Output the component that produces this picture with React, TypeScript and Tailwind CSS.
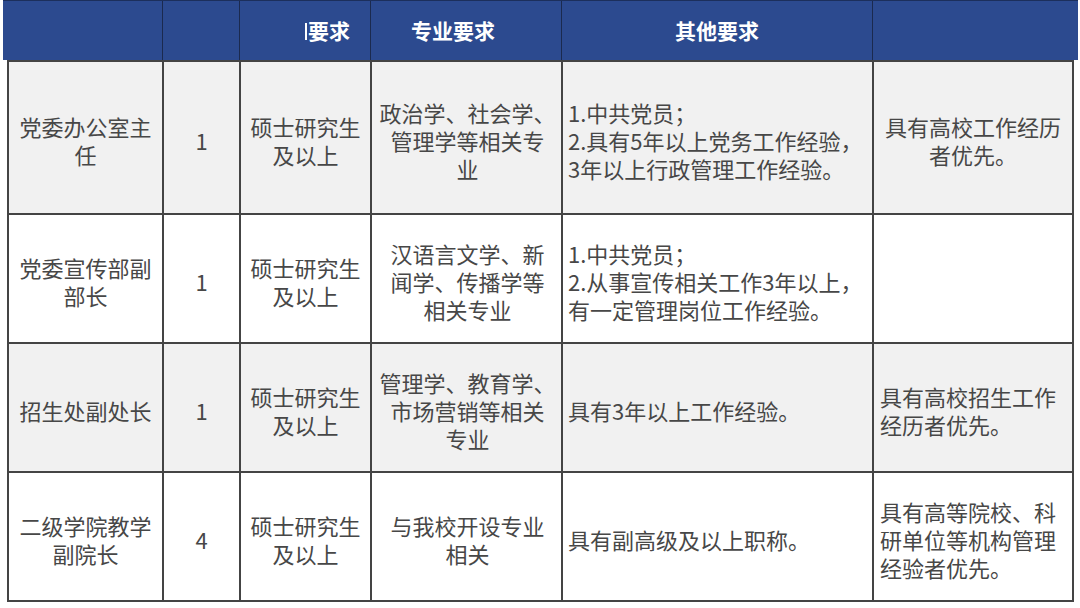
import React from "react";

type Row = {
  title: string[];
  count: string;
  degree: string[];
  major: string[];
  other: string[];
  extra: string[];
  extraAlign: "center" | "left";
  height: string;
  shaded: boolean;
};

const rows: Row[] = [
  {
    title: ["党委办公室主", "任"],
    count: "1",
    degree: ["硕士研究生", "及以上"],
    major: ["政治学、社会学、", "管理学等相关专", "业"],
    other: ["1.中共党员；", "2.具有5年以上党务工作经验，", "3年以上行政管理工作经验。"],
    extra: ["具有高校工作经历", "者优先。"],
    extraAlign: "center",
    height: "h-[153px]",
    shaded: true,
  },
  {
    title: ["党委宣传部副", "部长"],
    count: "1",
    degree: ["硕士研究生", "及以上"],
    major: ["汉语言文学、新", "闻学、传播学等", "相关专业"],
    other: ["1.中共党员；", "2.从事宣传相关工作3年以上，", "有一定管理岗位工作经验。"],
    extra: [],
    extraAlign: "center",
    height: "h-[129px]",
    shaded: false,
  },
  {
    title: ["招生处副处长"],
    count: "1",
    degree: ["硕士研究生", "及以上"],
    major: ["管理学、教育学、", "市场营销等相关", "专业"],
    other: ["具有3年以上工作经验。"],
    extra: ["具有高校招生工作", "经历者优先。"],
    extraAlign: "left",
    height: "h-[129px]",
    shaded: true,
  },
  {
    title: ["二级学院教学", "副院长"],
    count: "4",
    degree: ["硕士研究生", "及以上"],
    major: ["与我校开设专业", "相关"],
    other: ["具有副高级及以上职称。"],
    extra: ["具有高等院校、科", "研单位等机构管理", "经验者优先。"],
    extraAlign: "left",
    height: "h-[129px]",
    shaded: false,
  },
];

function Lines({ lines }: { lines: string[] }) {
  return (
    <div className="whitespace-nowrap">
      {lines.map((l, i) => (
        <div key={i}>{l}</div>
      ))}
    </div>
  );
}

const cell = "border-r-2 border-b-2 border-[#444] flex items-center";

export default function App() {
  return (
    <div
      className="w-[1080px] h-[608px] bg-white overflow-hidden text-[#474747]"
      style={{ fontFamily: '"Noto Sans CJK SC", "Noto Sans", sans-serif' }}
    >
      <div className="ml-[3px] w-[1075px] h-[60px] bg-[#2c4a8f] border-t border-[#1c2f5c] grid grid-cols-[160px_77px_131px_191px_311px_205px] text-white font-bold text-[21px]">
        <div className="border-r border-[#1b2a4f]" />
        <div className="border-r border-[#1b2a4f]" />
        <div className="border-r border-[#1b2a4f] flex items-center justify-end pr-[20px] pt-[1px]">
          <span className="w-[2px] h-[17px] bg-white mr-[1px]" />
          要求
        </div>
        <div className="border-r border-[#1b2a4f] flex items-center justify-center pr-[26px] pt-[1px]">
          专业要求
        </div>
        <div className="border-r border-[#1b2a4f] flex items-center justify-center pt-[1px]">
          其他要求
        </div>
        <div />
      </div>

      <div className="ml-[7px] w-[1067px] border-l-2 border-t-2 border-[#444] text-[22px] leading-[28px]">
        {rows.map((r, i) => (
          <div
            key={i}
            className={`grid grid-cols-[155px_77px_131px_191px_311px_200px] ${r.height} ${
              r.shaded ? "bg-[#f1f1f1]" : "bg-white"
            }`}
          >
            <div className={`${cell} justify-center text-center pt-[4px]`}>
              <Lines lines={r.title} />
            </div>
            <div className={`${cell} justify-center pt-[4px]`}>{r.count}</div>
            <div className={`${cell} justify-center text-center pt-[4px]`}>
              <Lines lines={r.degree} />
            </div>
            <div className={`${cell} justify-center text-center pt-[4px] pl-[2px]`}>
              <Lines lines={r.major} />
            </div>
            <div className={`${cell} pl-[5px] pt-[4px]`}>
              <Lines lines={r.other} />
            </div>
            <div
              className={`${cell} pt-[4px] ${
                r.extraAlign === "center" ? "justify-center text-center" : "pl-[6px]"
              }`}
            >
              <Lines lines={r.extra} />
            </div>
          </div>
        ))}
      </div>
    </div>
  );
}
